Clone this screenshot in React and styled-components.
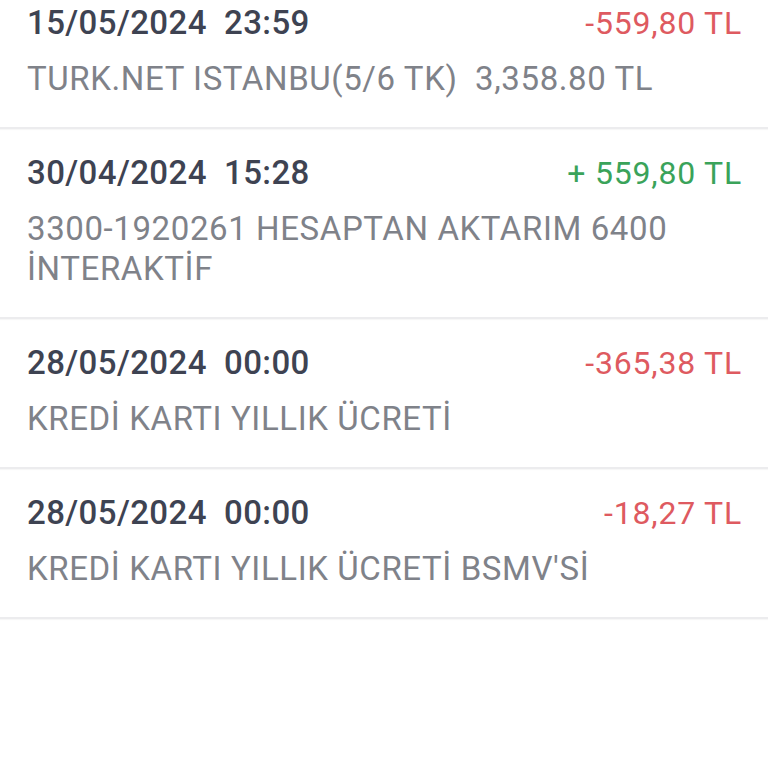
import React from 'react';
import styled, { createGlobalStyle } from 'styled-components';

const GlobalStyle = createGlobalStyle`
  html, body {
    margin: 0;
    padding: 0;
    background: #ffffff;
    overflow: hidden;
  }
  body {
    font-family: Roboto, "Noto Sans", Arial, sans-serif;
  }
`;

const Page = styled.div`
  width: 768px;
  height: 768px;
  background: #ffffff;
  overflow: hidden;
`;

const List = styled.div`
  display: flex;
  flex-direction: column;
  margin-top: -21px;
`;

const Row = styled.div`
  display: flex;
  flex-direction: column;
  gap: 16px;
  padding: 24px 26px 28px 27px;
  border-bottom: 2px solid #ececee;
  box-shadow: 0 1px 1px rgba(0, 0, 0, 0.03);
`;

const Header = styled.div`
  display: flex;
  align-items: baseline;
  justify-content: space-between;
  height: 40px;
`;

const DateText = styled.span`
  font-size: 33px;
  font-weight: 500;
  letter-spacing: 0.4px;
  line-height: 40px;
  color: #3e4352;
  white-space: pre;
`;

const Amount = styled.span`
  font-size: 32px;
  font-weight: 400;
  letter-spacing: 0.8px;
  line-height: 40px;
  color: ${p => (p.$positive ? '#3aa35a' : '#de5a60')};
  white-space: pre;
`;

const Description = styled.div`
  font-size: 33px;
  font-weight: 400;
  letter-spacing: 0.6px;
  line-height: 40px;
  color: #7f8289;
  white-space: pre-wrap;
`;

const rows = [
  { date: '15/05/2024  23:59', amount: '-559,80 TL', desc: 'TURK.NET ISTANBU(5/6 TK)  3,358.80 TL' },
  { date: '30/04/2024  15:28', amount: '+ 559,80 TL', positive: true, desc: '3300-1920261 HESAPTAN AKTARIM 6400\nİNTERAKTİF' },
  { date: '28/05/2024  00:00', amount: '-365,38 TL', desc: 'KREDİ KARTI YILLIK ÜCRETİ' },
  { date: '28/05/2024  00:00', amount: '-18,27 TL', desc: "KREDİ KARTI YILLIK ÜCRETİ BSMV'Sİ" },
];

export default function App() {
  return (
    <Page>
      <GlobalStyle />
      <List>
        {rows.map((r, i) => (
          <Row key={i}>
            <Header>
              <DateText>{r.date}</DateText>
              <Amount $positive={r.positive}>{r.amount}</Amount>
            </Header>
            <Description>{r.desc}</Description>
          </Row>
        ))}
      </List>
    </Page>
  );
}
